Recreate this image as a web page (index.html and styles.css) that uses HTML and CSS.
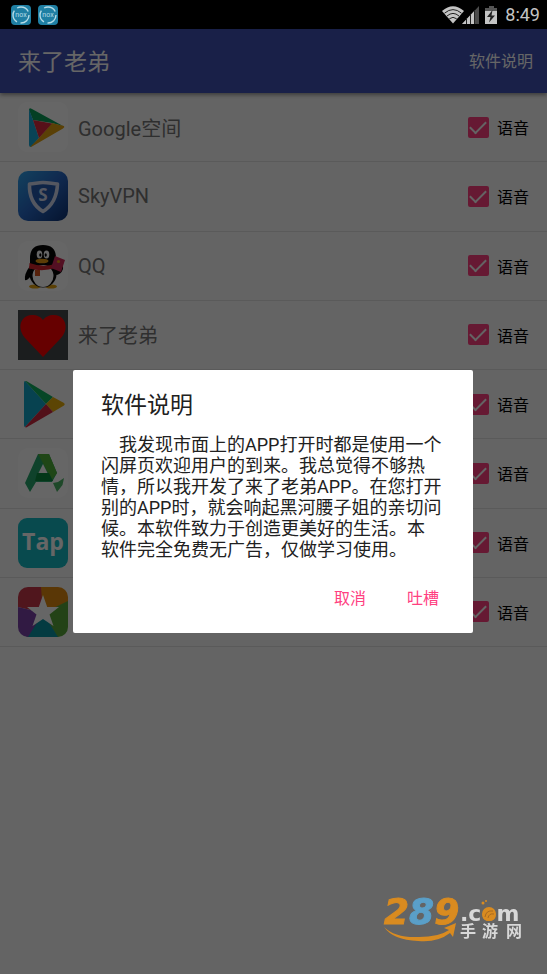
FILE: index.html
```
<!DOCTYPE html>
<html lang="zh-CN">

<head>
    <meta charset="UTF-8">
    <meta name="viewport" content="width=device-width, initial-scale=1.0">
    <title>来了老弟</title>
    <link rel="stylesheet" href="styles.css">
</head>

<body>
    <div class="statusbar">
        <svg class="nox" viewBox="0 0 20 20">
            <rect width="20" height="20" rx="4" fill="#1f7fa3" />
            <circle cx="10" cy="10" r="8" fill="none" stroke="#b4dbe6" stroke-width="1.4" stroke-dasharray="13 3.7" />
            <text x="10" y="12" text-anchor="middle" class="noxtext">nox</text>
        </svg>
        <svg class="nox" viewBox="0 0 20 20">
            <rect width="20" height="20" rx="4" fill="#1f7fa3" />
            <circle cx="10" cy="10" r="8" fill="none" stroke="#b4dbe6" stroke-width="1.4" stroke-dasharray="13 3.7" />
            <text x="10" y="12" text-anchor="middle" class="noxtext">nox</text>
        </svg>
        <svg class="signals" viewBox="0 0 56 20" width="56" height="20">
            <!-- wifi -->
            <path d="M0 6Q11 -3.500 22 6L11 18.500Z" fill="#c4c4c4" />
            <g fill="none" stroke="#222" stroke-width="1">
                <path d="M2.500 8.200Q11 1 19.500 8.200" />
                <path d="M5 11Q11 5.800 17 11" />
                <path d="M7.300 13.800Q11 10.800 14.700 13.800" />
            </g>
            <!-- mobile signal -->
            <path d="M20 19L37 1V19Z" fill="#4b4b4b" />
            <path d="M20 19L32 6.300V19Z" fill="#c4c4c4" />
            <path d="M24.500 13V19M28.500 9V19M32.500 5V19" stroke="#222" />
            <!-- battery -->
            <path d="M47 1h5v2h3v4H43V3h4Z" fill="#555" />
            <path d="M43 6h12v13H43Z" fill="#c4c4c4" />
            <path d="M50.500 5L45 12h3.500L47 17.500L53 10.500h-3.500Z" fill="#222" />
        </svg>
        <span class="clock">8:49</span>
    </div>

    <header class="appbar">
        <h1>来了老弟</h1>
        <button type="button" class="about">软件说明</button>
    </header>

    <ul class="applist">
        <li class="app">
            <svg class="icon" viewBox="0 0 50 50">
                <rect width="50" height="50" rx="9" fill="#fff" />
                <path d="M11 8Q11 5 14 7L45 24L34 21L15 18Z" fill="#0a9f58" />
                <path d="M11 7L15 18L21 36L13 45Q11 45 11 43Z" fill="#18a9d6" />
                <path d="M46 24Q47 25 45 26.500L14 44.500L12 45L21 36L34 21Z" fill="#e0a010" />
                <path d="M15 18L34 21.500L21 36Z" fill="#d92b3f" />
            </svg>
            <span class="name">Google空间</span>
            <label class="voice"><input type="checkbox" checked>语音</label>
        </li>
        <li class="app">
            <svg class="icon" viewBox="0 0 50 50">
                <defs>
                    <linearGradient id="sky" x1="0" y1="0" x2="1" y2="1">
                        <stop offset="0" stop-color="#30a4ec" />
                        <stop offset=".5" stop-color="#2766c4" />
                        <stop offset="1" stop-color="#0d3274" />
                    </linearGradient>
                </defs>
                <rect width="50" height="50" rx="10" fill="url(#sky)" />
                <path d="M25 11.500C20 11.500 16 13 11.500 13C11 25 16 35 25 40.500C34 35 39 25 39.500 13C35 13 31 11.500 25 11.500Z" fill="#245bb0" stroke="#d2daf0" stroke-width="3.600" stroke-linejoin="round" />
                <text x="25" y="30" text-anchor="middle" class="skytext">S</text>
            </svg>
            <span class="name">SkyVPN</span>
            <label class="voice"><input type="checkbox" checked>语音</label>
        </li>
        <li class="app">
            <svg class="icon" viewBox="0 0 50 50">
                <rect width="50" height="50" rx="10" fill="#fff" />
                <ellipse cx="17" cy="45.500" rx="6" ry="2" fill="#e0a010" />
                <ellipse cx="33" cy="45.500" rx="6" ry="2" fill="#e0a010" />
                <path d="M12 25Q6 33 7 39Q10 40 14 33Z" fill="#050505" />
                <path d="M37 25Q46 22 45 28Q43 34 37 34Z" fill="#050505" />
                <ellipse cx="25" cy="33" rx="13.500" ry="13.500" fill="#050505" />
                <path d="M12 24V17Q12 4 25 4Q38 4 38 17V24Z" fill="#050505" />
                <ellipse cx="25" cy="35" rx="10.500" ry="11" fill="#fff" />
                <ellipse cx="21.500" cy="13.500" rx="2.800" ry="4" fill="#fff" />
                <ellipse cx="28.500" cy="13.500" rx="2.800" ry="4" fill="#fff" />
                <ellipse cx="22.300" cy="14" rx="1.100" ry="1.800" fill="#000" />
                <ellipse cx="27.700" cy="14" rx="1.100" ry="1.800" fill="#000" />
                <ellipse cx="24" cy="20" rx="6.500" ry="2.300" fill="#e89a10" />
                <path d="M11.500 22Q25 27 37 23V27Q25 31 11 27.500Z" fill="#d8232c" />
                <path d="M17 29H22V35H17Z" fill="#d8541c" />
                <path d="M37 15L47 19L43 31L33 27Z" fill="#d02858" />
                <circle cx="40.500" cy="20.500" r="1.600" fill="#e89a10" />
            </svg>
            <span class="name">QQ</span>
            <label class="voice"><input type="checkbox" checked>语音</label>
        </li>
        <li class="app">
            <svg class="icon" viewBox="0 0 50 50">
                <rect width="50" height="50" fill="#45494d" />
                <path d="M25 47L7 28C-2 18 3 5 14 5C19 5 23 7 25 10C27 7 31 5 36 5C47 5 52 18 43 28Z" fill="#f00" />
            </svg>
            <span class="name">来了老弟</span>
            <label class="voice"><input type="checkbox" checked>语音</label>
        </li>
        <li class="app">
            <svg class="icon" viewBox="0 0 50 50">
                <path d="M7 2L28 25L7 48Q6 48 6 46V4Q6 2 7 2Z" fill="#12a5c8" />
                <path d="M7 2Q8 1.500 10 3L35 18L28 25Z" fill="#10b060" />
                <path d="M35 18L46 24Q47.500 25 46 26.500L35 33L28 25Z" fill="#e6ac0a" />
                <path d="M28 25L35 33L10 47.500Q8 49 7 48Z" fill="#cc2840" />
            </svg>
            <span class="name"></span>
            <label class="voice"><input type="checkbox" checked>语音</label>
        </li>
        <li class="app">
            <svg class="icon" viewBox="0 0 50 50">
                <rect width="50" height="50" rx="10" fill="#fff" />
                <path d="M20 6H31L39 25L34 34H18L12 44L7 35Z" fill="#27a56b" />
                <path d="M20 6H31L39 25L34 32Z" fill="#4fae38" />
                <path d="M19 25H31L35 33H17Z" fill="#0c8a40" />
                <path d="M25 16L20.500 25H29.500Z" fill="#fff" />
                <path d="M35 35L40 34L46 30L44.500 37L39 44Z" fill="#4cb467" />
            </svg>
            <span class="name"></span>
            <label class="voice"><input type="checkbox" checked>语音</label>
        </li>
        <li class="app">
            <svg class="icon" viewBox="0 0 50 50">
                <rect width="50" height="50" rx="9" fill="#14b9c4" />
                <text x="25" y="32" text-anchor="middle" class="taptext">Tap</text>
            </svg>
            <span class="name"></span>
            <label class="voice"><input type="checkbox" checked>语音</label>
        </li>
        <li class="app">
            <svg class="icon" viewBox="0 0 50 50">
                <clipPath id="round"><rect width="50" height="50" rx="10" /></clipPath>
                <g clip-path="url(#round)">
                    <path d="M0 0H24L25 26L0 20Z" fill="#c8374a" />
                    <path d="M23 0H50V15L25 26Z" fill="#e08a10" />
                    <path d="M50 14V50H39L25 26Z" fill="#58a63a" />
                    <path d="M40 50H8L25 26Z" fill="#0c94a4" />
                    <path d="M0 20L25 26L10 50H0Z" fill="#7a42a8" />
                </g>
                <path d="M25 8L29.200 20H41L31.500 27.500L35.500 39L25 32L14.500 39L18.500 27.500L9 20H20.800Z" fill="#fff" />
            </svg>
            <span class="name"></span>
            <label class="voice"><input type="checkbox" checked>语音</label>
        </li>
    </ul>

    <div class="overlay">
        <div class="dialog" role="dialog" aria-labelledby="dtitle">
            <h2 id="dtitle">软件说明</h2>
            <p>我发现市面上的APP打开时都是使用一个<br>闪屏页欢迎用户的到来。我总觉得不够热<br>情，所以我开发了来了老弟APP。在您打开<br>别的APP时，就会响起黑河腰子姐的亲切问<br>候。本软件致力于创造更美好的生活。本<br>软件完全免费无广告，仅做学习使用。</p>
            <div class="actions">
                <button type="button">取消</button>
                <button type="button">吐槽</button>
            </div>
        </div>
    </div>

    <svg class="watermark" viewBox="0 0 146 66" width="146" height="66">
        <text x="3" y="37" class="num"><tspan fill="#d98b20" stroke="#d98b20">2</tspan><tspan fill="#5a9fc8" stroke="#5a9fc8">8</tspan><tspan fill="#d98b20" stroke="#d98b20">9</tspan></text>
        <path d="M3 40Q14 51 38 50Q58 50 68 43L63 41L75 36L72 50L69 46Q56 56 37 54Q12 53 3 40Z" fill="#d98b20" />
        <text x="79" y="34" class="com">.c<tspan fill="#d98b20">o</tspan>m</text>
        <circle cx="108" cy="27" r="7" fill="#d98b20" />
        <path d="M104 30Q105 23 112 24M107 31Q108 26 113 27" fill="none" stroke="#a86a20" />
        <circle cx="102" cy="16" r="1.500" fill="#d98b20" />
        <circle cx="105" cy="14" r="1" fill="#d98b20" />
        <text x="79 101 125" y="50" class="site">手游网</text>
    </svg>
</body>

</html>
```
FILE: styles.css
```
* {
    box-sizing: border-box;
}

body {
    margin: 0;
    min-height: 100vh;
    background-color: #fafafa;
    font-family: Roboto, "Noto Sans CJK SC", sans-serif;
}

button {
    border: none;
    background: none;
    padding: 0;
    font-family: inherit;
    font-size: 16px;
    cursor: pointer;
}

/* status bar stays above the dimmed page */
.statusbar {
    position: relative;
    z-index: 3;
    display: flex;
    align-items: center;
    gap: 7px;
    height: 29px;
    padding: 0 7px 0 11px;
    background-color: #000;
}

.nox {
    width: 20px;
    height: 20px;
}

.noxtext {
    font: 7px Roboto, sans-serif;
    fill: #b4dbe6;
}

.signals {
    margin-left: auto;
}

.clock {
    color: #c4c4c4;
    font-size: 18px;
}

.appbar {
    position: relative;
    display: flex;
    align-items: center;
    justify-content: space-between;
    height: 64px;
    padding: 0 14px 2px 18px;
    background-color: #3f51b5;
    color: #fff;
    box-shadow: 0 2px 4px rgba(0, 0, 0, 0.4);
}

.appbar h1 {
    margin: 0;
    font-size: 23px;
    font-weight: normal;
}

.about {
    color: #fff;
}

.applist {
    display: grid;
    grid-auto-rows: 1fr;
    min-height: 554px;
    margin: 0;
    padding: 0;
    list-style: none;
}

.app {
    display: flex;
    align-items: center;
    gap: 10px;
    padding: 0 18px;
    border-bottom: 1px solid #e2e2e2;
}

.icon {
    width: 50px;
    height: 50px;
}

.skytext {
    font: bold 17px "Open Sans", sans-serif;
    fill: #d2daf0;
}

.taptext {
    font: bold 23px "Open Sans", sans-serif;
    fill: #fff;
}

.name {
    flex: 1;
    color: #757575;
    font-size: 20px;
}

.voice {
    display: flex;
    align-items: center;
    gap: 8px;
    color: #000;
    font-size: 16px;
}

.voice input {
    appearance: none;
    display: grid;
    place-items: center;
    width: 21px;
    height: 21px;
    margin: 0;
    border-radius: 2px;
    background-color: #ff4081;
}

.voice input:checked::before {
    content: "";
    width: 14px;
    height: 7px;
    margin-bottom: 4px;
    border-left: 2px solid #fafafa;
    border-bottom: 2px solid #fafafa;
    transform: rotate(-45deg);
}

.overlay {
    position: fixed;
    inset: 0;
    z-index: 2;
    display: flex;
    align-items: center;
    justify-content: center;
    padding: 29px 74px 0 73px;
    background-color: rgba(0, 0, 0, 0.6);
}

.dialog {
    width: 100%;
    padding: 19px 28px 18px;
    border-radius: 2px;
    background-color: #fff;
    color: #212121;
}

.dialog h2 {
    margin: 0 0 11px;
    font-size: 23px;
    font-weight: normal;
    line-height: 34px;
}

.dialog p {
    margin: 0;
    font-size: 18px;
    line-height: 21px;
    text-indent: 18px;
}

.actions {
    display: flex;
    justify-content: flex-end;
    gap: 41px;
    padding: 23px 6px 0;
}

.actions button {
    color: #ff4081;
    line-height: 32px;
}

.watermark {
    position: fixed;
    right: 20px;
    bottom: 21px;
    z-index: 3;
}

.num {
    font: italic bold 36px "DejaVu Sans", sans-serif;
}

.com {
    font: bold 22px "DejaVu Sans", sans-serif;
    fill: #d8d8d8;
}

.site {
    font: bold 16px "Noto Sans CJK SC", sans-serif;
    fill: #d8d8d8;
}
```
